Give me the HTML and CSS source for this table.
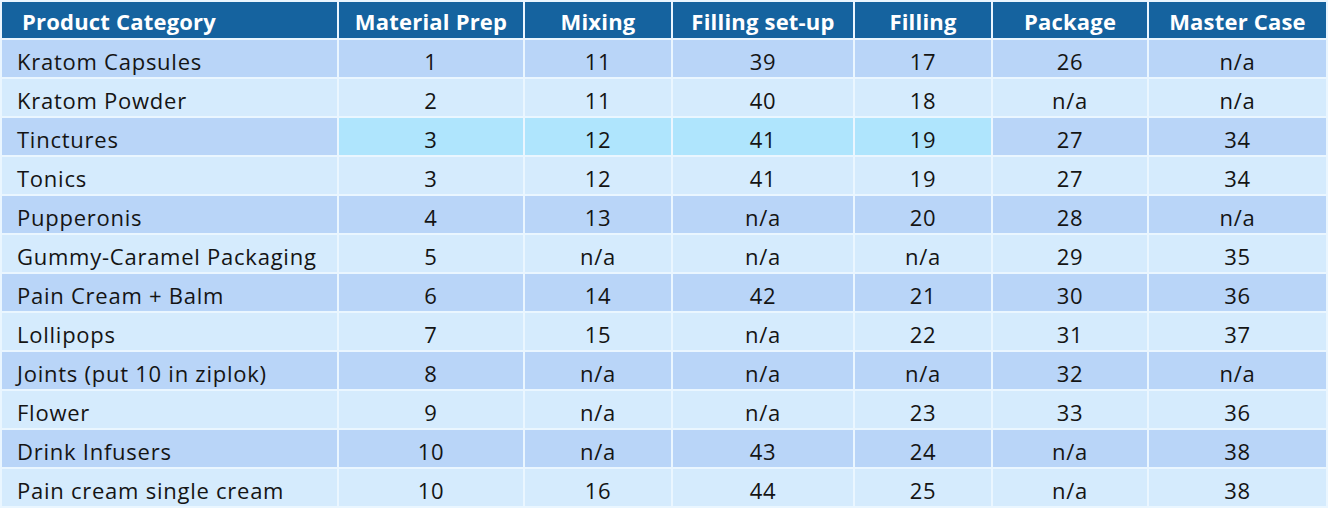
FILE: index.html
```html
<!DOCTYPE html>
<html>
<head>
<meta charset="utf-8">
<link rel="stylesheet" href="styles.css">
</head>
<body>
<table class="grid">
  <colgroup>
    <col class="c1"><col class="c2"><col class="c3"><col class="c4"><col class="c5"><col class="c6"><col class="c7">
  </colgroup>
  <thead>
    <tr>
      <th class="name">Product Category</th>
      <th>Material Prep</th>
      <th>Mixing</th>
      <th>Filling set-up</th>
      <th>Filling</th>
      <th>Package</th>
      <th>Master Case</th>
    </tr>
  </thead>
  <tbody>
    <tr class="dark"><td class="name">Kratom Capsules</td><td>1</td><td>11</td><td>39</td><td>17</td><td>26</td><td>n/a</td></tr>
    <tr class="light"><td class="name">Kratom Powder</td><td>2</td><td>11</td><td>40</td><td>18</td><td>n/a</td><td>n/a</td></tr>
    <tr class="dark"><td class="name">Tinctures</td><td class="hl">3</td><td class="hl">12</td><td class="hl">41</td><td class="hl">19</td><td>27</td><td>34</td></tr>
    <tr class="light"><td class="name">Tonics</td><td>3</td><td>12</td><td>41</td><td>19</td><td>27</td><td>34</td></tr>
    <tr class="dark"><td class="name">Pupperonis</td><td>4</td><td>13</td><td>n/a</td><td>20</td><td>28</td><td>n/a</td></tr>
    <tr class="light"><td class="name">Gummy-Caramel Packaging</td><td>5</td><td>n/a</td><td>n/a</td><td>n/a</td><td>29</td><td>35</td></tr>
    <tr class="dark"><td class="name">Pain Cream + Balm</td><td>6</td><td>14</td><td>42</td><td>21</td><td>30</td><td>36</td></tr>
    <tr class="light"><td class="name">Lollipops</td><td>7</td><td>15</td><td>n/a</td><td>22</td><td>31</td><td>37</td></tr>
    <tr class="dark"><td class="name">Joints (put 10 in ziplok)</td><td>8</td><td>n/a</td><td>n/a</td><td>n/a</td><td>32</td><td>n/a</td></tr>
    <tr class="light"><td class="name">Flower</td><td>9</td><td>n/a</td><td>n/a</td><td>23</td><td>33</td><td>36</td></tr>
    <tr class="dark"><td class="name">Drink Infusers</td><td>10</td><td>n/a</td><td>43</td><td>24</td><td>n/a</td><td>38</td></tr>
    <tr class="light"><td class="name">Pain cream single cream</td><td>10</td><td>16</td><td>44</td><td>25</td><td>n/a</td><td>38</td></tr>
  </tbody>
</table>
</body>
</html>
```

FILE: styles.css
```css
html, body {
  margin: 0;
  padding: 0;
  background: #ffffff;
}

.grid {
  table-layout: fixed;
  width: 1328px;
  border-collapse: separate;
  border-spacing: 2px;
  background: #eaf6ff;
  font-family: "Open Sans", "Liberation Sans", sans-serif;
  font-size: 22px;
  line-height: 26px;
  color: #141414;
}

.c1 { width: 335px; }
.c2 { width: 184px; }
.c3 { width: 146px; }
.c4 { width: 180px; }
.c5 { width: 136px; }
.c6 { width: 154px; }
.c7 { width: 177px; }

.grid th {
  height: 35px;
  padding: 1px 0 0;
  background: #15639f;
  color: #ffffff;
  font-weight: 700;
  letter-spacing: 0.2px;
  text-align: center;
  white-space: nowrap;
}

.grid th.name {
  text-align: left;
  padding-left: 20px;
}

.grid td {
  height: 33px;
  padding: 4px 0 0;
  letter-spacing: 0.75px;
  text-align: center;
  white-space: nowrap;
}

.grid td.name {
  text-align: left;
  padding-left: 15px;
}

.dark td { background: #b9d5f8; }
.light td { background: #d5ebfd; }
.dark td.hl { background: #afe5fd; }
```
